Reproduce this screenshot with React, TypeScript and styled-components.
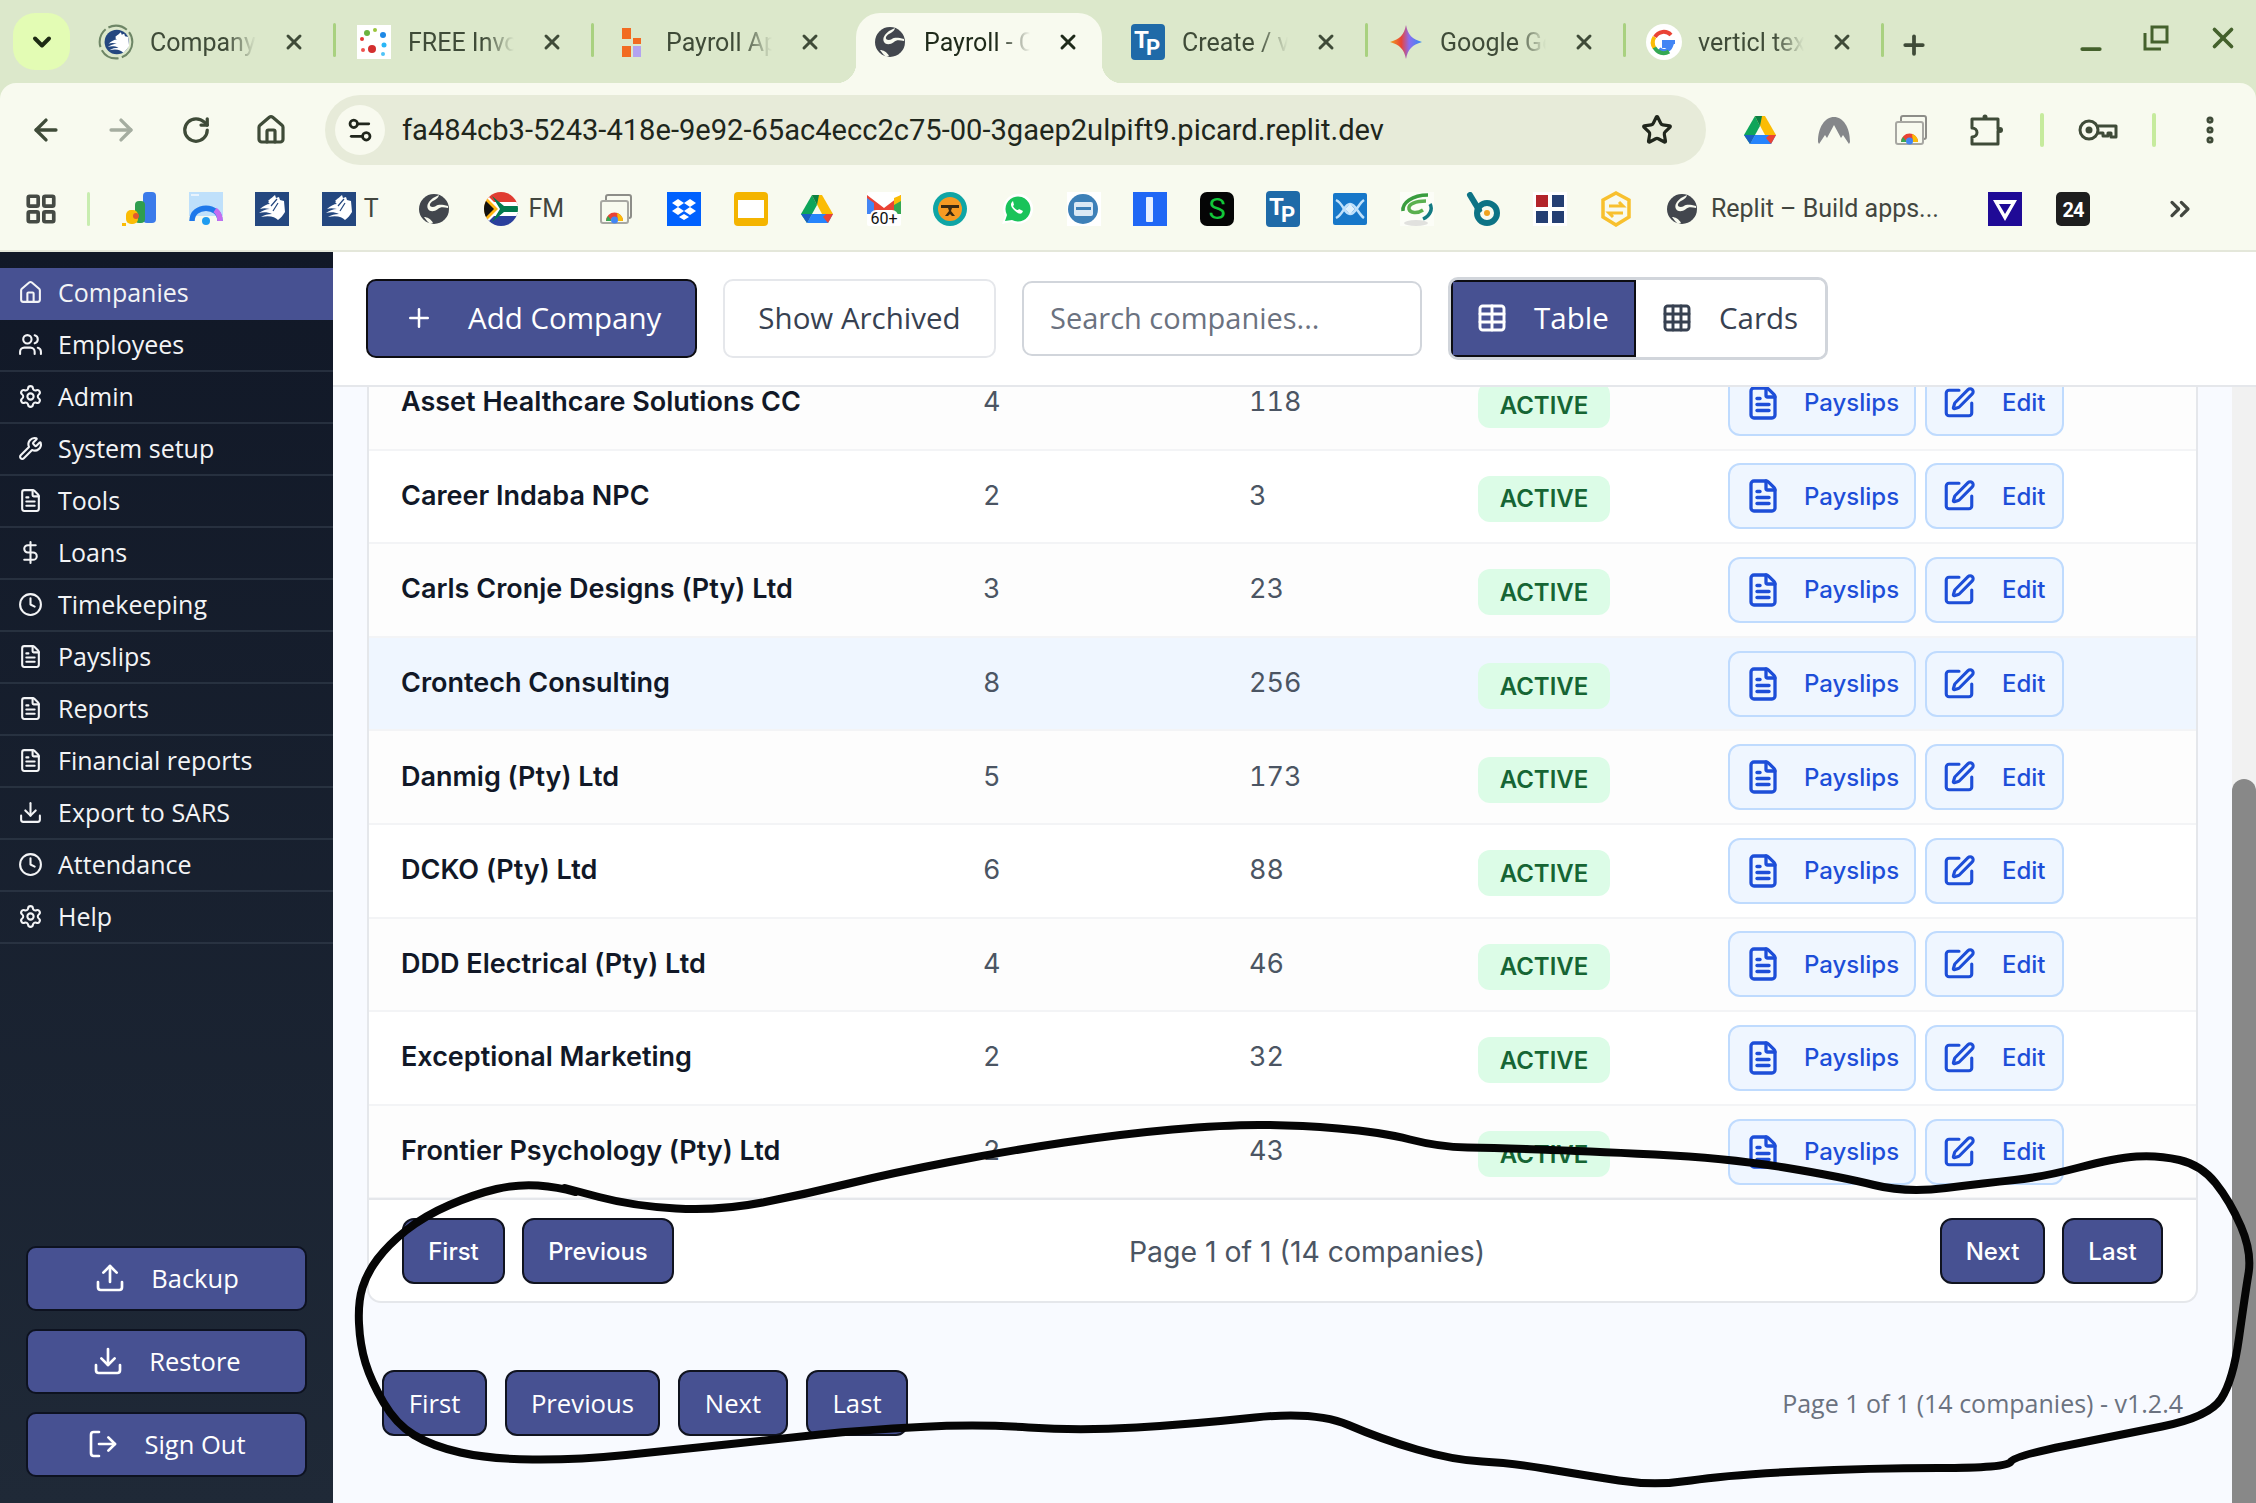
import React from 'react';
import styled, { createGlobalStyle } from 'styled-components';
import {
  ArrowLeft,
  ArrowRight,
  ChevronDown,
  ChevronsRight,
  Clock,
  DollarSign,
  Download,
  EllipsisVertical,
  FileText,
  Grid3x3,
  House,
  LayoutGrid,
  LogOut,
  Minus,
  Plus,
  RotateCw,
  Settings,
  Settings2,
  SquarePen,
  Star,
  Table,
  Upload,
  Users,
  Wrench,
  X,
} from 'lucide-react';

const INDIGO = '#475192';
const CHROME_INK = '#3f4b38';

const GlobalStyle = createGlobalStyle`
  html, body {
    margin: 0;
    padding: 0;
    width: 2256px;
    height: 1503px;
    overflow: hidden;
    background: #f8faff;
  }
  * { box-sizing: border-box; }
`;

/* ---------- favicons ---------- */

const Globe = () => (
  <svg viewBox="0 0 32 32" width="32" height="32">
    <circle cx="16" cy="16" r="15" fill="#42464d" />
    <path d="M21 2c-1 5-7 5-9 9-1 3 3 4 6 2 3-2 7-1 12 0v2c-5-1-8-1-10 1-4 3-8 3-10 0-2-4 1-8 5-11 2-1 4-2 6-3z" fill="#f8faef" />
    <path d="M6 24c3 0 7 2 9 6l-3 1c-2-2-4-4-6-7z" fill="#f8faef" />
  </svg>
);

const wing = 'M13 9c3-3 5-4 7-6l1 3 3-1 1 3 4 1 1 11c-2 3-4 6-7 8-3-3-8-5-17-3 3-2 7-3 11-3-4-2-9-2-13-1 3-2 7-4 11-4-4-1-7-1-10 0 3-3 7-5 10-5-2-1-2-2-1-3z';

const Feather = () => (
  <svg viewBox="0 0 34 34" width="34" height="34">
    <rect width="34" height="34" fill="#24477f" />
    <path d={wing} fill="#fff" />
    <path d="M16 14l6-7M18 19l5-8" stroke="#24477f" strokeWidth="1.2" fill="none" />
  </svg>
);

const TpIcon = () => (
  <svg viewBox="0 0 34 36" width="34" height="36">
    <rect width="34" height="36" rx="4" fill="#1f6aa8" />
    <text x="3" y="24" fontFamily="Roboto, sans-serif" fontWeight="700" fontSize="24" fill="#fff">T</text>
    <text x="15" y="31" fontFamily="Roboto, sans-serif" fontWeight="700" fontSize="22" fill="#fff">P</text>
  </svg>
);

const DriveIcon = () => (
  <svg viewBox="0 0 34 30" width="34" height="30">
    <path d="M12 1h10l11 19H22z" fill="#fbbc04" />
    <path d="M12 1L1 20l6 9 10-18z" fill="#0ea55a" />
    <path d="M12 1h10l-3 0-2 10z" fill="#0b8043" />
    <path d="M7 29l5-9h21l-5 9z" fill="#2684fc" />
    <path d="M26 20h7l-5 9-5-6z" fill="#ea4335" />
    <path d="M1 20h6l5 0-5 9z" fill="#1a5fc4" />
  </svg>
);

const ChromeWindow = () => (
  <svg viewBox="0 0 32 30" width="32" height="30">
    <rect x="6" y="1" width="25" height="23" rx="2" fill="#f8faef" stroke="#8d8d88" strokeWidth="2" />
    <rect x="1" y="7" width="27" height="22" rx="2" fill="#f8faef" stroke="#a7a7a2" strokeWidth="2" />
    <path d="M6 27a8.500 8.500 0 0 1 17 0h-5a3 3 0 0 0-7 0z" fill="#e94335" />
    <path d="M17 19a8.500 8.500 0 0 1 6 8h-5z" fill="#fbbc05" />
    <path d="M6 27a8.500 8.500 0 0 1 2-5l4 5z" fill="#34a853" />
    <circle cx="14.500" cy="26" r="3.500" fill="#4285f4" />
  </svg>
);

const PuzzleIcon = () => (
  <svg viewBox="0 0 38 36" width="38" height="36" fill="none" stroke="#3f4b38" strokeWidth="3" strokeLinejoin="round">
    <path d="M5 7h26v10l1 1-1 1v13H5v-7c3 0 5-2 5-4.500S8 16 5 16z" />
    <circle cx="18" cy="5" r="2.500" fill="#3f4b38" stroke="none" />
    <circle cx="33" cy="18" r="3" fill="#3f4b38" stroke="none" />
  </svg>
);

const KeyIcon = () => (
  <svg viewBox="0 0 40 24" width="40" height="24" fill="none" stroke="#3f4b38" strokeWidth="3" strokeLinejoin="round">
    <circle cx="11" cy="12" r="9" />
    <circle cx="11" cy="12" r="3.500" fill="#3f4b38" stroke="none" />
    <path d="M20 8h18v11h-5v-4h-3v3h-5v-3h-5" />
  </svg>
);

const favicons: Record<string, React.ReactNode> = {
  company: (
    <svg viewBox="0 0 44 44" width="44" height="44">
      <circle cx="22" cy="22" r="20" fill="none" stroke="#6e8666" strokeWidth="2.500" strokeDasharray="24 4" />
      <circle cx="23" cy="22" r="15" fill="#24477f" />
      <g transform="translate(8 7)"><path d={wing} fill="#fff" /></g>
    </svg>
  ),
  invoice: (
    <svg viewBox="0 0 34 34" width="34" height="34">
      <rect width="34" height="34" fill="#fff" />
      <circle cx="10" cy="8" r="3" fill="#6cb33f" /><circle cx="18" cy="5" r="2" fill="#9bc53d" />
      <circle cx="26" cy="10" r="3" fill="#1e88e5" /><circle cx="5" cy="14" r="2" fill="#e53935" />
      <circle cx="27" cy="20" r="2.500" fill="#29b6f6" /><circle cx="15" cy="24" r="4" fill="#d32f2f" />
      <circle cx="6" cy="25" r="2" fill="#ef5350" /><circle cx="26" cy="29" r="2" fill="#4fc3f7" />
    </svg>
  ),
  payrollApp: (
    <svg viewBox="0 0 34 34" width="34" height="34">
      <rect x="7" y="3" width="9" height="11" fill="#f26b21" /><rect x="18" y="13" width="8" height="6" fill="#f26b21" />
      <rect x="7" y="21" width="9" height="11" fill="#f26b21" /><rect x="18" y="21" width="8" height="11" fill="#b3a3f0" />
    </svg>
  ),
  gemini: (
    <svg viewBox="0 0 34 36" width="34" height="36">
      <defs>
        <linearGradient id="gem" x1="0" y1="0.5" x2="1" y2="0.5">
          <stop offset="0" stopColor="#f0a020" /><stop offset=".35" stopColor="#ea4335" />
          <stop offset=".6" stopColor="#8a6cf0" /><stop offset="1" stopColor="#2f8cf0" />
        </linearGradient>
      </defs>
      <path d="M17 1c2 10 6 14 16 17-10 3-14 7-16 17-2-10-6-14-16-17C11 15 15 11 17 1z" fill="url(#gem)" />
    </svg>
  ),
  google: (
    <svg viewBox="0 0 36 36" width="36" height="36">
      <circle cx="18" cy="18" r="18" fill="#fff" />
      <path d="M29 18H18v4h7a7.500 7.500 0 0 1-12 3" fill="none" stroke="#4285f4" strokeWidth="4" />
      <path d="M9 13a10 10 0 0 1 16-2" fill="none" stroke="#ea4335" strokeWidth="4" />
      <path d="M8.500 24a10 10 0 0 1 0-11" fill="none" stroke="#fbbc05" strokeWidth="4" />
      <path d="M8.500 23.500a10 10 0 0 0 14.500 4" fill="none" stroke="#34a853" strokeWidth="4" />
    </svg>
  ),
  ads: (
    <svg viewBox="0 0 34 34" width="34" height="34">
      <rect x="21" y="0" width="13" height="31" rx="4" fill="#3b7bea" />
      <rect x="13" y="9" width="10" height="22" rx="4" fill="#2f9e4f" />
      <rect x="4" y="18" width="12" height="14" rx="5" fill="#fbbc05" />
      <circle cx="14" cy="24" r="3" fill="#e2592f" />
      <rect x="0" y="31" width="4" height="3" fill="#fbbc05" />
    </svg>
  ),
  arc: (
    <svg viewBox="0 0 34 34" width="34" height="34">
      <rect width="34" height="24" fill="#bfe0fb" />
      <rect x="2" y="2" width="8" height="2" fill="#e8f3fd" />
      <path d="M3 29C3 12 31 12 31 29" fill="none" stroke="#1f78ea" strokeWidth="5.500" />
      <path d="M26 18c3 2 5 6 5 11" fill="none" stroke="#c56cf0" strokeWidth="5.500" />
      <circle cx="17" cy="29" r="4" fill="#1f9cf0" />
    </svg>
  ),
  flag: (
    <svg viewBox="0 0 34 34" width="34" height="34">
      <defs><clipPath id="flagc"><circle cx="17" cy="17" r="17" /></clipPath></defs>
      <g clipPath="url(#flagc)">
        <rect width="34" height="13" fill="#e03c31" />
        <rect y="21" width="34" height="13" fill="#2a3f9c" />
        <rect y="10" width="34" height="14" fill="#fff" />
        <path d="M0 0l17 17L0 34z" fill="#fff" />
        <path d="M0 3l14 14L0 31z" fill="#ffb612" />
        <path d="M0 7l10 10-10 10z" fill="#111" />
        <path d="M8 4l12 10h14v6H20L8 30l8-13z" fill="#007a4d" />
      </g>
    </svg>
  ),
  dropbox: (
    <svg viewBox="0 0 34 34" width="34" height="34">
      <rect width="34" height="34" fill="#0061fe" />
      <path d="M11 7l6 4-6 4-6-4zM23 7l6 4-6 4-6-4zM11 15l6 4-6 4-6-4zM23 15l6 4-6 4-6-4zM17 22l5 3-5 3-5-3z" fill="#fff" />
    </svg>
  ),
  slides: (
    <svg viewBox="0 0 34 34" width="34" height="34">
      <rect width="34" height="34" rx="4" fill="#f4b400" />
      <rect x="4" y="8" width="26" height="18" fill="#fff" />
    </svg>
  ),
  gmail: (
    <svg viewBox="0 0 34 34" width="34" height="34">
      <rect width="34" height="34" rx="2" fill="#fff" />
      <path d="M0 3l17 13L34 3v19H0z" fill="#ea4335" />
      <path d="M0 6v16h7V11z" fill="#4285f4" />
      <path d="M34 6v16h-7V11z" fill="#34a853" />
      <path d="M34 3v6l-7 4V6z" fill="#fbbc05" />
      <rect x="3" y="18" width="28" height="16" rx="6" fill="#fff" />
      <text x="17" y="32" textAnchor="middle" fontFamily="Roboto, sans-serif" fontSize="16" fill="#111">60+</text>
    </svg>
  ),
  sars: (
    <svg viewBox="0 0 34 34" width="34" height="34">
      <circle cx="17" cy="17" r="17" fill="#0fa5a5" />
      <circle cx="17" cy="17" r="12" fill="#f59a23" />
      <path d="M8 13h18v3H19l-1 3 4 5h-3l-2-2-2 2h-3l4-5-1-3H8z" fill="#3a2a12" />
    </svg>
  ),
  whatsapp: (
    <svg viewBox="0 0 34 34" width="34" height="34">
      <path d="M2 32l3-8a15 15 0 1 1 6 6z" fill="#fff" />
      <path d="M5 29l2-6a12.500 12.500 0 1 1 5 5z" fill="#19c35a" />
      <path d="M12 10c-2 2-1 5 2 8s6 5 8 3l1-2-4-2-1 1c-2 0-4-2-5-4l1-1-1-4z" fill="#fff" />
    </svg>
  ),
  blueCircle: (
    <svg viewBox="0 0 34 34" width="34" height="34">
      <rect width="34" height="34" fill="#fff" />
      <circle cx="16" cy="17" r="15" fill="#3d80b8" />
      <rect x="7" y="10" width="19" height="14" rx="2" fill="#dbe9f5" />
      <rect x="9" y="15" width="15" height="3" fill="#3d80b8" />
    </svg>
  ),
  blueBar: (
    <svg viewBox="0 0 34 34" width="34" height="34">
      <rect width="34" height="34" fill="#2067f5" />
      <rect x="13" y="5" width="7" height="25" rx="1" fill="#e6efff" />
    </svg>
  ),
  dollar: (
    <svg viewBox="0 0 34 34" width="34" height="34">
      <rect width="34" height="34" rx="7" fill="#050505" />
      <text x="17" y="27" textAnchor="middle" fontFamily="Roboto, sans-serif" fontWeight="400" fontSize="29" fill="#12c73a">S</text>
    </svg>
  ),
  weave: (
    <svg viewBox="0 0 34 32" width="34" height="32">
      <rect width="34" height="32" rx="2" fill="#1777c9" />
      <path d="M3 7c8 4 8 14 14 14S25 11 31 7M3 25c8-4 8-14 14-14s8 10 14 14" fill="none" stroke="#bfe0fb" strokeWidth="2.500" />
      <path d="M12 16l5-5 5 5-5 5z" fill="#dff0fd" />
    </svg>
  ),
  swirl: (
    <svg viewBox="0 0 34 34" width="34" height="34">
      <rect width="34" height="34" fill="#fcfdf7" />
      <path d="M28 3C12 3 2 11 3 19" fill="none" stroke="#3a9d3f" strokeWidth="3.500" />
      <path d="M26 9C16 9 8 12 9 17c1 4 8 5 14 1" fill="none" stroke="#5ab04f" strokeWidth="3.500" />
      <path d="M30 12c3 5 0 12-7 15" fill="none" stroke="#137a82" strokeWidth="3.500" />
      <ellipse cx="16" cy="31" rx="12" ry="3" fill="#e1e1de" />
    </svg>
  ),
  bee: (
    <svg viewBox="0 0 34 34" width="34" height="34">
      <path d="M4 3l9 15" fill="none" stroke="#0d7385" strokeWidth="6" strokeLinecap="round" />
      <circle cx="21" cy="21" r="10" fill="none" stroke="#0d7385" strokeWidth="6" />
      <circle cx="21" cy="21" r="3" fill="#f0a21e" />
    </svg>
  ),
  squares: (
    <svg viewBox="0 0 34 34" width="34" height="34">
      <rect width="34" height="34" fill="#fff" />
      <rect x="3" y="3" width="12" height="12" fill="#b3242b" /><rect x="19" y="3" width="12" height="12" fill="#253f73" />
      <rect x="3" y="19" width="12" height="12" fill="#253f73" /><rect x="19" y="19" width="12" height="12" fill="#253f73" />
    </svg>
  ),
  sync: (
    <svg viewBox="0 0 34 36" width="34" height="36">
      <path d="M17 2l13 7v17l-13 8-13-8V9z" fill="none" stroke="#f8c02e" strokeWidth="3.500" />
      <path d="M10 15h14l-4-4M24 22H10l4 4" fill="none" stroke="#f8c02e" strokeWidth="3" />
    </svg>
  ),
  vee: (
    <svg viewBox="0 0 34 34" width="34" height="34">
      <rect width="34" height="34" fill="#1f0a96" />
      <path d="M5 8h24L17 29zM11 12l6 10 6-10z" fill="#fff" fillRule="evenodd" />
    </svg>
  ),
  black24: (
    <svg viewBox="0 0 34 34" width="34" height="34">
      <rect width="34" height="34" rx="5" fill="#1e1e1e" />
      <text x="17" y="25" textAnchor="middle" fontFamily="Roboto, sans-serif" fontWeight="700" fontSize="20" letterSpacing="-1" fill="#fff">24</text>
    </svg>
  ),
  nord: (
    <svg viewBox="0 0 34 28" width="34" height="28">
      <path d="M1 26C1 11 8 1 17 1s16 10 16 25l-1 2-6-9-2 3-7-13-7 13-2-3-6 9z" fill="#85878a" />
    </svg>
  ),
};

/* ---------- browser chrome ---------- */

const Chrome = styled.header`
  flex: none;
  background: #dce8cb;
`;

const TabStrip = styled.div`
  height: 83px;
  display: flex;
  align-items: flex-end;
  padding-left: 13px;
  font-family: Roboto, sans-serif;
`;

const TabSwitcher = styled.div`
  width: 57px;
  height: 57px;
  margin: 0 6px 13px 0;
  border-radius: 22px;
  background: #e3fcb4;
  color: #1d2a14;
  display: flex;
  align-items: center;
  justify-content: center;
`;

const Tab = styled.div<{ $active?: boolean }>`
  position: relative;
  width: ${({ $active }) => ($active ? '246px' : '258px')};
  height: 70px;
  margin: ${({ $active }) => ($active ? '0 6px' : '0')};
  padding: 0 0 12px ${({ $active }) => ($active ? '16px' : '22px')};
  display: flex;
  align-items: center;
  color: ${({ $active }) => ($active ? '#1f2a1a' : CHROME_INK)};
  background: ${({ $active }) => ($active ? '#f8faef' : 'transparent')};
  border-radius: 24px 24px 0 0;
  ${({ $active }) =>
    $active &&
    `
    &::before, &::after {
      content: '';
      position: absolute;
      bottom: 0;
      width: 20px;
      height: 20px;
    }
    &::before {
      left: -20px;
      background: radial-gradient(circle at 0 0, transparent 20px, #f8faef 20.5px);
    }
    &::after {
      right: -20px;
      background: radial-gradient(circle at 100% 0, transparent 20px, #f8faef 20.5px);
    }
  `}
`;

const TabDivider = styled.span`
  position: absolute;
  right: -2px;
  top: 10px;
  width: 3px;
  height: 34px;
  border-radius: 2px;
  background: #a9d180;
`;

const TabIcon = styled.span`
  width: 36px;
  height: 44px;
  flex: none;
  display: flex;
  align-items: center;
  justify-content: center;
`;

const TabTitle = styled.span`
  width: 106px;
  margin: 0 26px 0 16px;
  overflow: hidden;
  white-space: nowrap;
  font-size: 25px;
  -webkit-mask-image: linear-gradient(90deg, #000 72%, transparent 100%);
  mask-image: linear-gradient(90deg, #000 72%, transparent 100%);
`;

const NewTab = styled.span`
  margin: 0 0 23px 17px;
  color: ${CHROME_INK};
  display: flex;
`;

const WindowControls = styled.div`
  margin-left: auto;
  align-self: flex-start;
  padding: 12px 16px 0 0;
  display: flex;
  gap: 36px;
  align-items: center;
  color: #44612c;
`;

const Toolbar = styled.div`
  height: 169px;
  background: #f8faef;
  border-radius: 16px 16px 0 0;
  border-bottom: 2px solid #e4e7da;
  font-family: Roboto, sans-serif;
`;

const AddressRow = styled.div`
  height: 94px;
  padding: 12px 0 12px 27px;
  display: flex;
  align-items: center;
  color: ${CHROME_INK};
`;

const NavButton = styled.span<{ $dim?: boolean }>`
  width: 38px;
  flex: none;
  display: flex;
  justify-content: center;
  margin-right: 37px;
  color: ${({ $dim }) => ($dim ? '#a5ada0' : CHROME_INK)};
`;

const Omnibox = styled.div`
  width: 1381px;
  height: 70px;
  flex: none;
  padding: 0 33px 0 10px;
  margin-left: -2px;
  border-radius: 35px;
  background: #e7ebd9;
  display: flex;
  align-items: center;
  color: #20261c;
`;

const SiteChip = styled.span`
  width: 50px;
  height: 50px;
  border-radius: 50%;
  background: #f8faef;
  display: flex;
  align-items: center;
  justify-content: center;
  margin-right: 17px;
`;

const UrlText = styled.span`
  flex: 1;
  font-size: 29.1px;
  white-space: nowrap;
`;

const ExtensionRow = styled.div`
  flex: none;
  display: flex;
  align-items: center;
  margin-left: 37px;
`;

const ExtensionSlot = styled.span<{ $w: number }>`
  width: ${({ $w }) => $w}px;
  flex: none;
  display: flex;
  justify-content: center;
  align-items: center;
`;

const ToolbarDivider = styled.span`
  width: 4px;
  height: 34px;
  flex: none;
  border-radius: 2px;
  background: #c6eb9d;
`;

const BookmarkRow = styled.div`
  height: 73px;
  padding: 0 0 10px 24px;
  display: flex;
  align-items: center;
  color: #42463f;
  font-size: 25px;
`;

const Bookmark = styled.span<{ $w?: number; $gap?: number }>`
  width: ${({ $w }) => $w ?? 66.6}px;
  height: 40px;
  flex: none;
  display: flex;
  align-items: center;
  gap: ${({ $gap }) => $gap ?? 8}px;
  white-space: nowrap;
`;

const BookmarkDivider = styled.span`
  width: 3px;
  height: 34px;
  margin: 0 32px 0 29px;
  flex: none;
  border-radius: 2px;
  background: #c8edb0;
`;

/* ---------- page ---------- */

const Root = styled.div`
  position: relative;
  width: 2256px;
  height: 1503px;
  display: flex;
  flex-direction: column;
  overflow: hidden;
`;

const Body = styled.div`
  flex: 1;
  min-height: 0;
  display: flex;
`;

const Sidebar = styled.aside`
  width: 333px;
  flex: none;
  padding: 16px 0 26px;
  display: flex;
  flex-direction: column;
  justify-content: space-between;
  background: linear-gradient(180deg, #111827 0%, #1f2937 100%);
  font-family: 'Open Sans', sans-serif;
`;

const NavList = styled.nav`
  display: flex;
  flex-direction: column;
`;

const NavItem = styled.div<{ $active?: boolean }>`
  height: 52px;
  padding: 0 0 2px 18px;
  display: flex;
  align-items: center;
  gap: 15px;
  font-size: 25px;
  color: #f3f4f6;
  background: ${({ $active }) => ($active ? INDIGO : 'transparent')};
  border-bottom: 2px solid ${({ $active }) => ($active ? INDIGO : 'rgba(55, 65, 81, 0.55)')};
`;

const SideActions = styled.div`
  padding: 0 26px;
  display: flex;
  flex-direction: column;
  gap: 18px;
`;

const SideButton = styled.div`
  height: 65px;
  padding-bottom: 1px;
  display: flex;
  align-items: center;
  justify-content: center;
  gap: 25px;
  border-radius: 10px;
  border: 2px solid #0d1220;
  background: ${INDIGO};
  color: #fff;
  font-size: 25.5px;
`;

const Main = styled.main`
  flex: 1;
  min-width: 0;
  display: flex;
  flex-direction: column;
`;

const TopBar = styled.div`
  height: 135px;
  flex: none;
  position: relative;
  z-index: 1;
  padding: 27px 0 0 33px;
  display: flex;
  align-items: flex-start;
  background: #fff;
  border-bottom: 2px solid #e5e7eb;
  font-family: 'Open Sans', sans-serif;
  font-size: 29.5px;
`;

const TopButton = styled.div<{ $primary?: boolean }>`
  height: 79px;
  padding-bottom: 2px;
  display: flex;
  align-items: center;
  gap: 34px;
  border-radius: 10px;
  ${({ $primary }) =>
    $primary
      ? `
    width: 331px;
    padding-left: 36px;
    margin-right: 26px;
    background: ${INDIGO};
    color: #fff;
    border: 2px solid #0d0d12;
  `
      : `
    width: 273px;
    justify-content: center;
    margin-right: 26px;
    background: #fff;
    color: #374151;
    border: 2px solid #e5e7eb;
  `}
`;

const SearchInput = styled.div`
  width: 400px;
  height: 75px;
  margin: 2px 26px 0 0;
  padding: 0 0 2px 26px;
  display: flex;
  align-items: center;
  font-size: 29px;
  color: #6b7280;
  background: #fff;
  border: 2px solid #d1d5db;
  border-radius: 10px;
`;

const ViewToggle = styled.div`
  width: 380px;
  height: 83px;
  margin-top: -2px;
  display: flex;
  border-radius: 10px;
  border: 3px solid #d1d5db;
  overflow: hidden;
`;

const ViewOption = styled.div<{ $active?: boolean }>`
  flex: ${({ $active }) => ($active ? '0 0 185px' : '1')};
  padding: 0 0 2px ${({ $active }) => ($active ? '23px' : '25px')};
  display: flex;
  align-items: center;
  gap: 26px;
  color: ${({ $active }) => ($active ? '#fff' : '#374151')};
  background: ${({ $active }) => ($active ? INDIGO : '#fff')};
  ${({ $active }) => $active && 'border: 2px solid #0d0d12;'}
`;

const ScrollArea = styled.div`
  flex: 1;
  min-height: 0;
  display: flex;
  overflow: hidden;
`;

const Content = styled.div`
  flex: 1;
  min-width: 0;
  padding: 0 34px;
  font-family: Inter, sans-serif;
  display: flex;
  flex-direction: column;
`;

const Card = styled.section`
  margin-top: -30px;
  background: #fff;
  border: 2px solid #e5e7eb;
  border-top: 0;
  border-radius: 0 0 14px 14px;
`;

const Row = styled.div<{ $highlight?: boolean; $odd?: boolean }>`
  height: 93.6px;
  padding-left: 32px;
  display: grid;
  grid-template-columns: 582px 266px 229px 250px 1fr;
  align-items: center;
  background: ${({ $highlight, $odd }) => ($highlight ? '#eff6ff' : $odd ? '#fdfdfd' : '#fff')};
  border-bottom: 2px solid #f3f4f6;
`;

const NameCell = styled.div`
  padding-bottom: 2px;
  font-size: 27px;
  font-weight: 600;
  color: #111827;
  white-space: nowrap;
`;

const NumberCell = styled.div`
  padding-bottom: 2px;
  font-size: 27px;
  font-variant-numeric: tabular-nums;
  color: #4b5563;
`;

const StatusBadge = styled.span`
  width: 132px;
  height: 46px;
  margin-top: 5px;
  display: flex;
  align-items: center;
  justify-content: center;
  border-radius: 12px;
  background: #dcfce7;
  color: #166534;
  font-size: 24px;
  font-weight: 600;
`;

const ActionCell = styled.div`
  display: flex;
  gap: 9px;
`;

const ActionButton = styled.span<{ $w: number; $gap: number }>`
  width: ${({ $w }) => $w}px;
  height: 66px;
  padding-left: 15px;
  display: flex;
  align-items: center;
  gap: ${({ $gap }) => $gap}px;
  border-radius: 12px;
  border: 2px solid #bfdbfe;
  background: #eff6ff;
  color: #1d4ed8;
  font-size: 24px;
  font-weight: 500;
`;

const Pagination = styled.div`
  height: 103px;
  padding: 18px 33px 0;
  display: flex;
  justify-content: space-between;
  align-items: flex-start;
  border-top: 2px solid #e5e7eb;
  margin-top: -1px;
`;

const PageGroup = styled.div<{ $gap: number }>`
  display: flex;
  gap: ${({ $gap }) => $gap}px;
`;

const PageButton = styled.span<{ $w: number; $sans?: boolean }>`
  width: ${({ $w }) => $w}px;
  height: 66px;
  display: flex;
  align-items: center;
  justify-content: center;
  border-radius: 12px;
  border: 2px solid #10131f;
  background: ${INDIGO};
  color: #fff;
  font-size: ${({ $sans }) => ($sans ? '25.7px' : '24px')};
  font-weight: ${({ $sans }) => ($sans ? 400 : 500)};
  font-family: ${({ $sans }) => ($sans ? "'Open Sans', sans-serif" : 'Inter, sans-serif')};
`;

const PageInfo = styled.span`
  height: 66px;
  display: flex;
  align-items: center;
  font-size: 28.4px;
  color: #4b5563;
`;

const BottomBar = styled.div`
  margin-top: 67px;
  padding: 0 15px;
  display: flex;
  justify-content: space-between;
  align-items: center;
  font-family: 'Open Sans', sans-serif;
`;

const BottomInfo = styled.span`
  font-size: 25px;
  color: #6b7280;
`;

const ScrollTrack = styled.div`
  width: 24px;
  flex: none;
  padding-top: 392px;
  background: #f1f1f1;
`;

const ScrollThumb = styled.div`
  height: 740px;
  border-radius: 12px;
  background: #888;
`;

const Scribble = styled.svg`
  position: absolute;
  left: 0;
  top: 0;
  z-index: 2;
  pointer-events: none;
`;

/* ---------- data ---------- */

const tabs = [
  { title: 'Company', icon: 'company' },
  { title: 'FREE Invoice', icon: 'invoice' },
  { title: 'Payroll App', icon: 'payrollApp' },
  { title: 'Payroll - Companies', icon: 'globe', active: true },
  { title: 'Create / view', icon: 'tp' },
  { title: 'Google Gemini', icon: 'gemini' },
  { title: 'verticl text', icon: 'google' },
];

const tabIcon = (name: string) => {
  if (name === 'globe') return <Globe />;
  if (name === 'tp') return <TpIcon />;
  return favicons[name];
};

const navItems = [
  { label: 'Companies', Icon: House, active: true },
  { label: 'Employees', Icon: Users },
  { label: 'Admin', Icon: Settings },
  { label: 'System setup', Icon: Wrench },
  { label: 'Tools', Icon: FileText },
  { label: 'Loans', Icon: DollarSign },
  { label: 'Timekeeping', Icon: Clock },
  { label: 'Payslips', Icon: FileText },
  { label: 'Reports', Icon: FileText },
  { label: 'Financial reports', Icon: FileText },
  { label: 'Export to SARS', Icon: Download },
  { label: 'Attendance', Icon: Clock },
  { label: 'Help', Icon: Settings },
];

const companies = [
  { name: 'Asset Healthcare Solutions CC', payrolls: 4, employees: 118 },
  { name: 'Career Indaba NPC', payrolls: 2, employees: 3 },
  { name: 'Carls Cronje Designs (Pty) Ltd', payrolls: 3, employees: 23 },
  { name: 'Crontech Consulting', payrolls: 8, employees: 256, highlight: true },
  { name: 'Danmig (Pty) Ltd', payrolls: 5, employees: 173 },
  { name: 'DCKO (Pty) Ltd', payrolls: 6, employees: 88 },
  { name: 'DDD Electrical (Pty) Ltd', payrolls: 4, employees: 46 },
  { name: 'Exceptional Marketing', payrolls: 2, employees: 32 },
  { name: 'Frontier Psychology (Pty) Ltd', payrolls: 2, employees: 43 },
];

// the pen line somebody drew round the pagination, in full-size coordinates
const scribble = [
  [575, 1192], [558, 1187], [518, 1184], [475, 1194], [424, 1216], [388, 1245], [367, 1273], [358, 1302], [360, 1345],
  [371, 1381], [396, 1424], [432, 1446], [489, 1459], [576, 1460], [676, 1450], [777, 1439], [863, 1430],
  [978, 1424], [1079, 1431], [1194, 1424], [1316, 1411], [1381, 1439], [1453, 1460], [1511, 1463], [1583, 1475],
  [1655, 1486], [1727, 1475], [1870, 1468], [2007, 1468], [2014, 1456], [2115, 1436], [2209, 1417], [2233, 1381],
  [2245, 1295], [2252, 1252], [2230, 1201], [2201, 1165], [2158, 1155], [2115, 1158], [2043, 1177], [1986, 1183],
  [1906, 1193], [1842, 1177], [1727, 1158], [1583, 1151], [1496, 1148], [1439, 1147], [1381, 1132], [1295, 1125],
  [1223, 1125], [1122, 1134], [1007, 1151], [892, 1173], [806, 1194], [719, 1211], [633, 1206], [565, 1188],
];

const smoothPath = (points: number[][]) => {
  let d = `M${points[0][0]} ${points[0][1]}`;
  for (let i = 1; i < points.length - 1; i++) {
    const midX = (points[i][0] + points[i + 1][0]) / 2;
    const midY = (points[i][1] + points[i + 1][1]) / 2;
    d += ` Q${points[i][0]} ${points[i][1]} ${midX} ${midY}`;
  }
  const last = points[points.length - 1];
  return `${d} L${last[0]} ${last[1]}`;
};

const App: React.FC = () => (
  <Root>
    <GlobalStyle />
    <Chrome>
      <TabStrip>
        <TabSwitcher>
          <ChevronDown size={28} strokeWidth={3.4} />
        </TabSwitcher>
        {tabs.map((tab, index) => (
          <Tab key={tab.title} $active={tab.active}>
            <TabIcon>{tabIcon(tab.icon)}</TabIcon>
            <TabTitle>{tab.title}</TabTitle>
            <X size={24} strokeWidth={3} />
            {!tab.active && index !== 2 && <TabDivider />}
          </Tab>
        ))}
        <NewTab>
          <Plus size={30} strokeWidth={3} />
        </NewTab>
        <WindowControls>
          <Minus size={30} strokeWidth={3} style={{ marginTop: 22 }} />
          <svg width="28" height="28" viewBox="0 0 28 28" fill="none" stroke="currentColor" strokeWidth="3">
            <rect x="10" y="3" width="15" height="15" />
            <path d="M3 9v16h16" />
          </svg>
          <X size={34} strokeWidth={2.6} />
        </WindowControls>
      </TabStrip>
      <Toolbar>
        <AddressRow>
          <NavButton><ArrowLeft size={34} strokeWidth={2.4} /></NavButton>
          <NavButton $dim><ArrowRight size={34} strokeWidth={2.4} /></NavButton>
          <NavButton><RotateCw size={30} strokeWidth={2.6} /></NavButton>
          <NavButton><House size={32} strokeWidth={2.4} /></NavButton>
          <Omnibox>
            <SiteChip><Settings2 size={30} strokeWidth={2.2} /></SiteChip>
            <UrlText>fa484cb3-5243-418e-9e92-65ac4ecc2c75-00-3gaep2ulpift9.picard.replit.dev</UrlText>
            <Star size={32} strokeWidth={2.4} />
          </Omnibox>
          <ExtensionRow>
            <ExtensionSlot $w={34}><DriveIcon /></ExtensionSlot>
            <ExtensionSlot $w={114}>{favicons.nord}</ExtensionSlot>
            <ExtensionSlot $w={40}><ChromeWindow /></ExtensionSlot>
            <ExtensionSlot $w={109}><PuzzleIcon /></ExtensionSlot>
            <ToolbarDivider />
            <ExtensionSlot $w={108}><KeyIcon /></ExtensionSlot>
            <ToolbarDivider />
            <ExtensionSlot $w={108}><EllipsisVertical size={34} strokeWidth={3} /></ExtensionSlot>
          </ExtensionRow>
        </AddressRow>
        <BookmarkRow>
          <Bookmark $w={34}><LayoutGrid size={34} strokeWidth={2.6} color="#454a44" /></Bookmark>
          <BookmarkDivider />
          <Bookmark>{favicons.ads}</Bookmark>
          <Bookmark>{favicons.arc}</Bookmark>
          <Bookmark><Feather /></Bookmark>
          <Bookmark $w={96}><Feather />T</Bookmark>
          <Bookmark><Globe /></Bookmark>
          <Bookmark $w={116} $gap={10}>{favicons.flag}FM</Bookmark>
          <Bookmark><ChromeWindow /></Bookmark>
          <Bookmark>{favicons.dropbox}</Bookmark>
          <Bookmark>{favicons.slides}</Bookmark>
          <Bookmark><DriveIcon /></Bookmark>
          <Bookmark>{favicons.gmail}</Bookmark>
          <Bookmark>{favicons.sars}</Bookmark>
          <Bookmark>{favicons.whatsapp}</Bookmark>
          <Bookmark>{favicons.blueCircle}</Bookmark>
          <Bookmark>{favicons.blueBar}</Bookmark>
          <Bookmark>{favicons.dollar}</Bookmark>
          <Bookmark><TpIcon /></Bookmark>
          <Bookmark>{favicons.weave}</Bookmark>
          <Bookmark>{favicons.swirl}</Bookmark>
          <Bookmark>{favicons.bee}</Bookmark>
          <Bookmark>{favicons.squares}</Bookmark>
          <Bookmark>{favicons.sync}</Bookmark>
          <Bookmark $w={322} $gap={13}><Globe />Replit – Build apps...</Bookmark>
          <Bookmark $w={68}>{favicons.vee}</Bookmark>
          <Bookmark $w={108}>{favicons.black24}</Bookmark>
          <ChevronsRight size={32} strokeWidth={2.4} />
        </BookmarkRow>
      </Toolbar>
    </Chrome>
    <Body>
      <Sidebar>
        <NavList>
          {navItems.map(({ label, Icon, active }) => (
            <NavItem key={label} $active={active}>
              <Icon size={25} strokeWidth={2} />
              {label}
            </NavItem>
          ))}
        </NavList>
        <SideActions>
          <SideButton><Upload size={32} strokeWidth={2} />Backup</SideButton>
          <SideButton><Download size={32} strokeWidth={2} />Restore</SideButton>
          <SideButton><LogOut size={32} strokeWidth={2} />Sign Out</SideButton>
        </SideActions>
      </Sidebar>
      <Main>
        <TopBar>
          <TopButton $primary><Plus size={30} strokeWidth={2} />Add Company</TopButton>
          <TopButton>Show Archived</TopButton>
          <SearchInput>Search companies...</SearchInput>
          <ViewToggle>
            <ViewOption $active><Table size={32} strokeWidth={2.2} />Table</ViewOption>
            <ViewOption><Grid3x3 size={32} strokeWidth={2.2} />Cards</ViewOption>
          </ViewToggle>
        </TopBar>
        <ScrollArea>
          <Content>
            <Card>
              {companies.map((company, index) => (
                <Row key={company.name} $highlight={company.highlight} $odd={index % 2 === 0}>
                  <NameCell>{company.name}</NameCell>
                  <NumberCell>{company.payrolls}</NumberCell>
                  <NumberCell>{company.employees}</NumberCell>
                  <StatusBadge>ACTIVE</StatusBadge>
                  <ActionCell>
                    <ActionButton $w={188} $gap={23}><FileText size={36} strokeWidth={2.2} />Payslips</ActionButton>
                    <ActionButton $w={139} $gap={26}><SquarePen size={34} strokeWidth={2.2} />Edit</ActionButton>
                  </ActionCell>
                </Row>
              ))}
              <Pagination>
                <PageGroup $gap={17}>
                  <PageButton $w={103}>First</PageButton>
                  <PageButton $w={152}>Previous</PageButton>
                </PageGroup>
                <PageInfo>Page 1 of 1 (14 companies)</PageInfo>
                <PageGroup $gap={17}>
                  <PageButton $w={105}>Next</PageButton>
                  <PageButton $w={101}>Last</PageButton>
                </PageGroup>
              </Pagination>
            </Card>
            <BottomBar>
              <PageGroup $gap={18}>
                <PageButton $sans $w={105}>First</PageButton>
                <PageButton $sans $w={155}>Previous</PageButton>
                <PageButton $sans $w={110}>Next</PageButton>
                <PageButton $sans $w={102}>Last</PageButton>
              </PageGroup>
              <BottomInfo>Page 1 of 1 (14 companies) - v1.2.4</BottomInfo>
            </BottomBar>
          </Content>
          <ScrollTrack>
            <ScrollThumb />
          </ScrollTrack>
        </ScrollArea>
      </Main>
    </Body>
    <Scribble width="2256" height="1503" viewBox="0 0 2256 1503" fill="none">
      <path d={smoothPath(scribble)} stroke="#050505" strokeWidth="8" strokeLinecap="round" strokeLinejoin="round" />
    </Scribble>
  </Root>
);

export default App;
